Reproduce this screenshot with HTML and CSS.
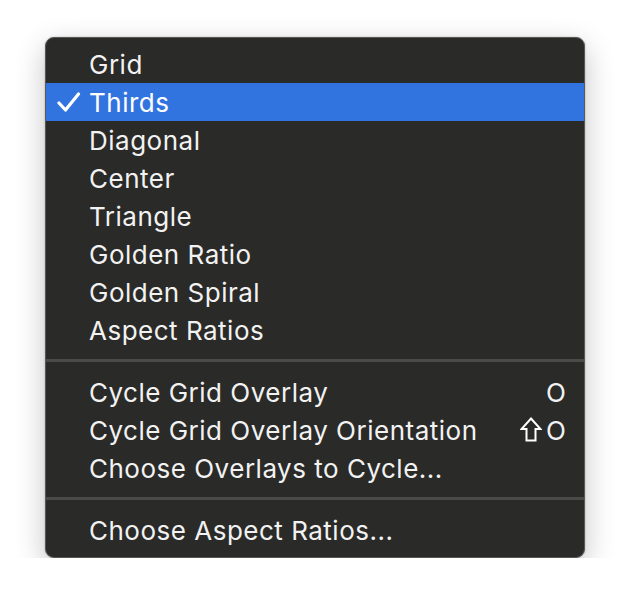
FILE: index.html
```html
<!DOCTYPE html>
<html>
<head>
<meta charset="utf-8">
<link rel="stylesheet" href="styles.css">
</head>
<body>
<div class="stage">
  <div class="menu">
    <div class="item"><span class="label">Grid</span></div>
    <div class="item selected">
      <svg class="check" viewBox="0 0 24 20" width="24" height="20"><polyline points="2,11 8.5,18 21.5,2" fill="none" stroke="#fff" stroke-width="3.2" stroke-linecap="round" stroke-linejoin="round"/></svg>
      <span class="label">Thirds</span>
    </div>
    <div class="item"><span class="label">Diagonal</span></div>
    <div class="item"><span class="label">Center</span></div>
    <div class="item"><span class="label">Triangle</span></div>
    <div class="item"><span class="label">Golden Ratio</span></div>
    <div class="item"><span class="label">Golden Spiral</span></div>
    <div class="item"><span class="label">Aspect Ratios</span></div>
    <div class="sep"></div>
    <div class="item"><span class="label">Cycle Grid Overlay</span><span class="key">O</span></div>
    <div class="item"><span class="label">Cycle Grid Overlay Orientation</span><span class="key"><svg class="shift" viewBox="0 0 22 25" width="22" height="25"><path d="M11 1.5 L20.5 12 L15.5 12 L15.5 23.5 L6.5 23.5 L6.5 12 L1.5 12 Z" fill="none" stroke="#fff" stroke-width="2" stroke-linejoin="miter"/></svg>O</span></div>
    <div class="item"><span class="label">Choose Overlays to Cycle...</span></div>
    <div class="sep"></div>
    <div class="item"><span class="label">Choose Aspect Ratios...</span></div>
  </div>
</div>
</body>
</html>
```
FILE: styles.css
```css
html, body {
  margin: 0;
  padding: 0;
  background: #ffffff;
}
.stage {
  padding: 37px 0 0 45px;
}
.menu {
  width: 538px;
  box-sizing: content-box;
  background: #2a2a28;
  border: 1px solid #575756;
  border-radius: 9px;
  padding: 7px 0 8px;
  box-shadow: 0 10px 30px rgba(0,0,0,0.24), 0 0 2px rgba(0,0,0,0.25);
  font-family: "Inter", "Liberation Sans", sans-serif;
  font-size: 26px;
  color: #f2f2f2;
}
.item {
  height: 38px;
  display: flex;
  align-items: center;
  position: relative;
  padding: 0 18px 0 43px;
}
.item.selected {
  background: #3274df;
  color: #ffffff;
}
.check {
  position: absolute;
  left: 11px;
  top: 9px;
}
.label {
  flex: 1;
  letter-spacing: 0.5px;
}
.key {
  display: flex;
  align-items: center;
  flex-shrink: 0;
}
.shift {
  flex-shrink: 0;
  width: 22px;
  height: 25px;
  margin-right: 4px;
  margin-top: -1px;
}
.sep {
  height: 3px;
  background: #4a4a48;
  margin: 10px 0 11px;
}
```
